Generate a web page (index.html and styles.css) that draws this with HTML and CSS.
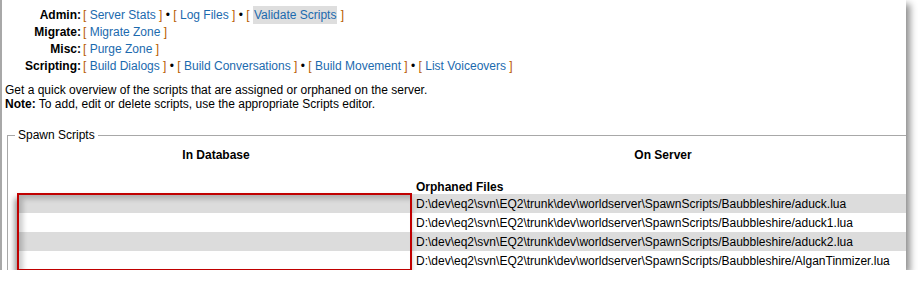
FILE: index.html
```html
<!DOCTYPE html>
<html lang="en">
<head>
    <meta charset="UTF-8">
    <title>Validate Scripts</title>
    <link rel="stylesheet" href="styles.css">
</head>
<body>
    <div class="shot">
        <div class="page">
            <table class="menu">
                <tr>
                    <td class="lbl">Admin:</td>
                    <td><span class="br">[</span> <a href="#">Server Stats</a> <span class="br">]</span> &bull; <span class="br">[</span> <a href="#">Log Files</a> <span class="br">]</span> &bull; <span class="br">[</span> <a href="#" class="sel">Validate Scripts</a> <span class="br">]</span></td>
                </tr>
                <tr>
                    <td class="lbl">Migrate:</td>
                    <td><span class="br">[</span> <a href="#">Migrate Zone</a> <span class="br">]</span></td>
                </tr>
                <tr>
                    <td class="lbl">Misc:</td>
                    <td><span class="br">[</span> <a href="#">Purge Zone</a> <span class="br">]</span></td>
                </tr>
                <tr>
                    <td class="lbl">Scripting:</td>
                    <td><span class="br">[</span> <a href="#">Build Dialogs</a> <span class="br">]</span> &bull; <span class="br">[</span> <a href="#">Build Conversations</a> <span class="br">]</span> &bull; <span class="br">[</span> <a href="#">Build Movement</a> <span class="br">]</span> &bull; <span class="br">[</span> <a href="#">List Voiceovers</a> <span class="br">]</span></td>
                </tr>
            </table>

            <p class="intro">
                Get a quick overview of the scripts that are assigned or orphaned on the server.<br>
                <b>Note:</b> To add, edit or delete scripts, use the appropriate Scripts editor.
            </p>

            <fieldset class="box">
                <legend>Spawn Scripts</legend>
                <table class="scripts">
                    <tr class="head">
                        <th class="col-db">In Database</th>
                        <th>On Server</th>
                    </tr>
                    <tr class="sub">
                        <td></td>
                        <td>Orphaned Files</td>
                    </tr>
                    <tr class="row alt"><td></td><td>D:\dev\eq2\svn\EQ2\trunk\dev\worldserver\SpawnScripts/Baubbleshire/aduck.lua</td></tr>
                    <tr class="row"><td></td><td>D:\dev\eq2\svn\EQ2\trunk\dev\worldserver\SpawnScripts/Baubbleshire/aduck1.lua</td></tr>
                    <tr class="row alt"><td></td><td>D:\dev\eq2\svn\EQ2\trunk\dev\worldserver\SpawnScripts/Baubbleshire/aduck2.lua</td></tr>
                    <tr class="row"><td></td><td>D:\dev\eq2\svn\EQ2\trunk\dev\worldserver\SpawnScripts/Baubbleshire/AlganTinmizer.lua</td></tr>
                </table>
            </fieldset>
        </div>
        <div class="mark"></div>
    </div>
</body>
</html>
```

FILE: styles.css
```css
body{
 margin: 0;
 background-color: white;
 font-family: "Liberation Sans", Arial, sans-serif;
 font-size: 12px;
 color: black;
}
.shot{
 position: relative;
 width: 906px;
 height: 270px;
 background-color: white;
 box-shadow: 4px 4px 7px rgba(0, 0, 0, 0.45);
}
.page{
 width: 904px;
 height: 270px;
 overflow: hidden;
 border-left: 2px solid #a8a8a8;
}
.menu{
 border-collapse: collapse;
 margin-top: 6px;
}
.menu td{
 padding: 0 0 0 2px;
 height: 17px;
 white-space: nowrap;
}
.menu .lbl{
 width: 79px;
 text-align: right;
 font-weight: bold;
 padding: 0;
}
.br{
 color: #b85c00;
}
a{
 color: #1b6aae;
 text-decoration: none;
}
a.sel{
 background-color: #dedede;
 padding: 2px 1px;
}
.intro{
 margin: 9px 0 0 3px;
 line-height: 14px;
}
.box{
 margin: 17px 0 0 5px;
 padding: 0 0 0 11px;
 width: 1000px;
 border: none;
 border-top: 1px solid #a8a8a8;
 border-left: 1px solid #a8a8a8;
}
.box legend{
 margin-left: -4px;
 padding: 0 3px;
}
.scripts{
 border-collapse: collapse;
 width: 894px;
}
.scripts .col-db{
 width: 392px;
}
.head th{
 height: 17px;
 padding-top: 4px;
}
.sub td{
 font-weight: bold;
 height: 30px;
 padding: 0 0 0 3px;
 vertical-align: bottom;
}
.row td{
 height: 19px;
 padding: 0 0 0 3px;
 white-space: nowrap;
}
.alt td{
 background-color: #dcdcdc;
}
.mark{
 position: absolute;
 left: 17px;
 top: 193px;
 width: 391px;
 height: 74px;
 border: 2px solid #c00000;
 box-shadow: -2px 5px 6px rgba(0, 0, 0, 0.45), inset 4px 4px 5px rgba(0, 0, 0, 0.2);
}
```
